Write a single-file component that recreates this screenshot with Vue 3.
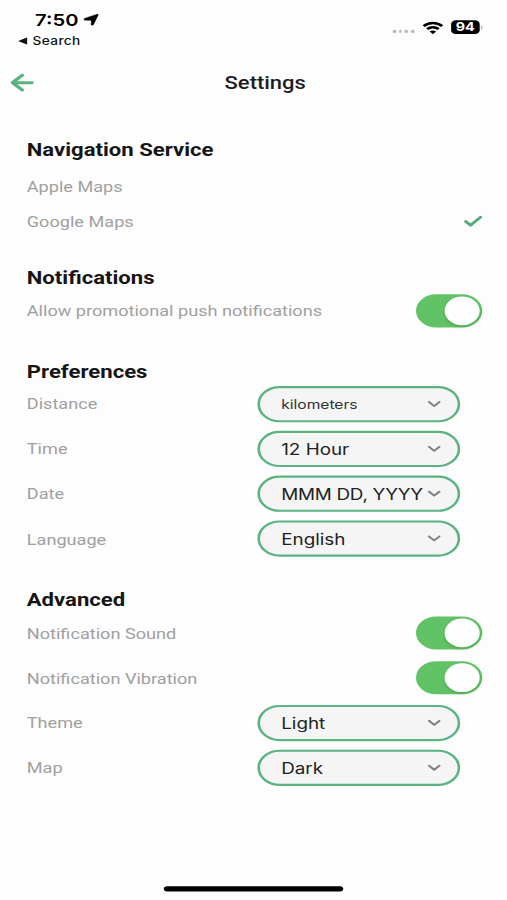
<script setup>
import { ref } from 'vue'

const services = ['Apple Maps', 'Google Maps']
const service = ref('Google Maps')

const sections = ref([
  {
    title: 'Notifications',
    rows: [{ label: 'Allow promotional push notifications', on: true }],
  },
  {
    title: 'Preferences',
    rows: [
      { label: 'Distance', value: 'kilometers', size: 'small' },
      { label: 'Time', value: '12 Hour' },
      { label: 'Date', value: 'MMM DD, YYYY', size: 'tight' },
      { label: 'Language', value: 'English' },
    ],
  },
  {
    title: 'Advanced',
    rows: [
      { label: 'Notification Sound', on: true },
      { label: 'Notification Vibration', on: true },
      { label: 'Theme', value: 'Light' },
      { label: 'Map', value: 'Dark' },
    ],
  },
])
</script>

<template>
  <div class="viewport">
    <div class="phone">
      <div class="status">
        <div class="status-left">
          <div class="clock">
            <span>7:50</span>
            <svg class="loc" viewBox="0 0 12 12"><path d="M11 .3Q12.2 0 11.8 1.1L7.8 11Q6.9 12.6 6.2 11V7Q6.2 6.2 5.4 6.2H1.2Q-.6 5.6.8 4.5Z" fill="#000" stroke="#000" stroke-width=".4" /></svg>
          </div>
          <div class="back-app">
            <svg class="tri" viewBox="0 0 7 7"><path d="M0 3.5 7 0v7z" fill="#111" /></svg>
            <span>Search</span>
          </div>
        </div>
        <div class="status-right">
          <div class="dots"><i v-for="n in 4" :key="n"></i></div>
          <svg class="wifi" viewBox="0 0 16 12">
            <g fill="none" stroke="#000" stroke-width="2.4">
              <path d="M.9 4.5a10 10 0 0 1 14.2 0" />
              <path d="M3.6 7.4a6.2 6.2 0 0 1 8.8 0" />
            </g>
            <path d="M8 12 5.5 9.6a3.4 3.4 0 0 1 5 0z" fill="#000" />
          </svg>
          <div class="battery">94</div>
          <div class="nub"></div>
        </div>
      </div>

      <header class="header">
        <svg class="arrow" viewBox="0 0 18 17">
          <path d="M9.2 1.5 1.6 8.5l7.6 7M1.8 8.5h14.9" fill="none" stroke="#5bb381" stroke-width="2.8" stroke-linecap="round" stroke-linejoin="round" />
        </svg>
        <h1>Settings</h1>
      </header>

      <main>
        <section class="services">
          <h2>Navigation Service</h2>
          <div v-for="s in services" :key="s" class="service" @click="service = s">
            <span class="label">{{ s }}</span>
            <svg v-if="s === service" class="check" viewBox="0 0 14 11">
              <path d="M1.3 5.7 5 9.2 12.7 1.6" fill="none" stroke="#50ad7b" stroke-width="2.5" stroke-linecap="round" stroke-linejoin="miter" />
            </svg>
          </div>
        </section>

        <section v-for="sec in sections" :key="sec.title">
          <h2>{{ sec.title }}</h2>
          <div v-for="row in sec.rows" :key="row.label" class="row">
            <span class="label">{{ row.label }}</span>
            <div v-if="row.value" class="select" :class="row.size">
              <span class="value">{{ row.value }}</span>
              <svg class="chevron" viewBox="0 0 10 6"><path d="M.9.9 5 4.8 9.1.9" fill="none" stroke="#808080" stroke-width="1.7" stroke-linecap="round" stroke-linejoin="round" /></svg>
            </div>
            <div v-else class="toggle" :class="{ on: row.on }" @click="row.on = !row.on"><div class="knob"></div></div>
          </div>
        </section>
      </main>

      <div class="home"></div>
    </div>
  </div>
</template>

<style>
body {
  background: #fdfdfd;
}
</style>

<style scoped>
.viewport {
  width: 507px;
  height: 900px;
  overflow: hidden;
  background: #fdfdfd;
}
/* 390x844 device canvas stretched over the viewport */
.phone {
  width: 390px;
  height: 844px;
  display: flex;
  flex-direction: column;
  transform: scale(1.3, 1.0664);
  transform-origin: 0 0;
  font-family: Roboto, sans-serif;
  color: #1c1c1c;
}
.status {
  height: 55px;
  display: flex;
  justify-content: space-between;
  font-family: Inter, sans-serif;
  color: #000;
}
.status-left {
  padding: 8px 0 0 14px;
}
.clock {
  display: flex;
  align-items: center;
  height: 21px;
  padding-left: 13px;
  gap: 4px;
  font-size: 15.5px;
  font-weight: 600;
  line-height: 21px;
}
.loc {
  width: 12px;
  height: 11.5px;
}
.back-app {
  display: flex;
  align-items: center;
  gap: 4px;
  height: 19px;
  font-size: 10.5px;
  font-weight: 500;
  line-height: 19px;
  letter-spacing: 0.3px;
  color: #111;
}
.tri {
  width: 7px;
  height: 7px;
}
.status-right {
  display: flex;
  align-items: center;
  height: 13px;
  margin: 19px 19px 0 0;
}
.dots {
  display: flex;
  gap: 1.9px;
  margin: 8.5px 6.2px 0 0;
}
.dots i {
  width: 2.7px;
  height: 3.2px;
  border-radius: 50%;
  background: #bcbcbc;
}
.wifi {
  width: 16px;
  height: 12px;
  margin-right: 6px;
}
.battery {
  width: 22px;
  height: 13px;
  border-radius: 3.6px;
  background: #000;
  color: #fff;
  font-size: 11px;
  font-weight: 700;
  line-height: 13.5px;
  text-align: center;
}
.nub {
  width: 1.2px;
  height: 4px;
  margin-left: 1px;
  border-radius: 0 2px 2px 0;
  background: #b5b5b5;
}
.header {
  display: grid;
  grid-template-columns: 30px 1fr 12px;
  align-items: center;
  height: 44px;
  padding: 0 8px;
}
.arrow {
  width: 18px;
  height: 17px;
}
h1 {
  margin: 0;
  text-align: center;
  font-size: 16.9px;
  font-weight: 500;
  line-height: 20px;
}
main {
  padding: 31px 19px 0 20.6px;
  flex: 1;
}
h2 {
  margin: 0;
  height: 20px;
  font-size: 17px;
  font-weight: 700;
  line-height: 20px;
  color: #151515;
}
section + section {
  margin-top: 25.6px;
}
.services h2 {
  margin-bottom: 8.5px;
}
.service {
  display: flex;
  align-items: center;
  justify-content: space-between;
  height: 32.8px;
}
.check {
  width: 14px;
  height: 11px;
  margin-bottom: 1px;
}
.row {
  display: flex;
  align-items: center;
  justify-content: space-between;
  height: 42.25px;
}
.label {
  padding-top: 0.6px;
  font-size: 13.95px;
  line-height: 18px;
  color: #a0a0a0;
}
.select {
  box-sizing: border-box;
  display: flex;
  align-items: center;
  justify-content: space-between;
  width: 156px;
  height: 34px;
  margin-right: 17px;
  padding: 0 13px 0 16.3px;
  border: 2px solid #5bb381;
  border-radius: 17px;
  background: #f5f5f5;
  font-family: Inter, sans-serif;
  font-size: 14.5px;
  white-space: nowrap;
  color: #222;
}
.value {
  padding-top: 0.8px;
}
.select.small {
  font-size: 12px;
  color: #333;
}
.select.tight {
  letter-spacing: -0.2px;
}
.chevron {
  flex: none;
  width: 10px;
  height: 6px;
}
.toggle {
  box-sizing: border-box;
  width: 51px;
  height: 31px;
  margin-top: 0.8px;
  padding: 2px;
  border-radius: 15.5px;
  background: #d8d8d8;
}
.toggle.on {
  display: flex;
  justify-content: flex-end;
  background: #61c366;
}
.knob {
  width: 27px;
  height: 27px;
  border-radius: 50%;
  background: #fdfefd;
  box-shadow: 0 1.5px 3px rgba(0, 0, 0, 0.16);
}
.home {
  width: 138.5px;
  height: 5px;
  margin: 0 auto 8px;
  border-radius: 3px;
  background: #000;
}
</style>
